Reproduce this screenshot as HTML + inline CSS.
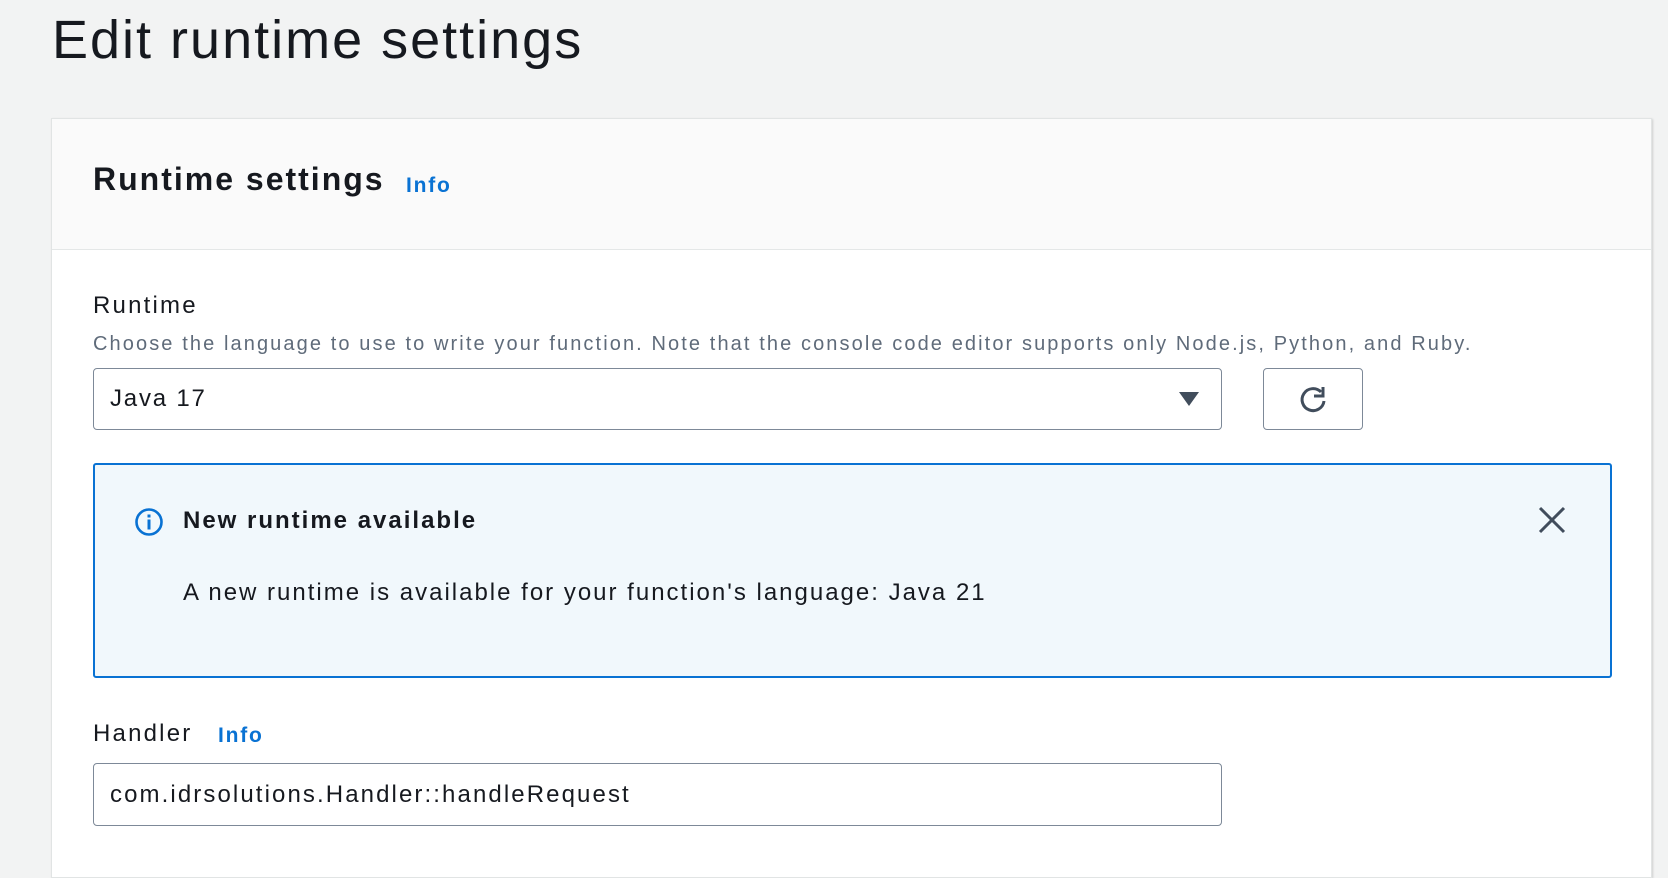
<!DOCTYPE html>
<html><head><meta charset="utf-8"><style>
*{margin:0;padding:0;box-sizing:border-box}
body{width:1668px;height:864px;background:#f2f3f3;font-family:"Liberation Sans",Arial,sans-serif;color:#16191f;position:relative;overflow:hidden}
.abs{position:absolute;white-space:nowrap}
h1{position:absolute;left:52px;top:9px;font-size:54px;font-weight:400;letter-spacing:2px;color:#16191f}
.panel{position:absolute;left:51px;top:118px;width:1601px;height:760px;background:#fff;border:1px solid #e1e4e4;box-shadow:1px 1px 2px rgba(0,0,0,.15)}
.hdr{position:absolute;left:0;top:0;right:0;height:131px;background:#fafafa;border-bottom:1px solid #e4e7e7}
.info{color:#0972d3;font-weight:700;letter-spacing:1.8px}
.box{position:absolute;border:1px solid #7d8998;border-radius:4px;background:#fff}
</style></head><body>
<h1>Edit runtime settings</h1>
<div class="panel"><div class="hdr"></div></div>
<div class="abs" style="left:93px;top:161px;font-size:32px;font-weight:700;letter-spacing:2px">Runtime settings</div>
<div class="abs info" style="left:406px;top:174px;font-size:21px">Info</div>
<div class="abs" style="left:93px;top:292px;font-size:24px;letter-spacing:2.2px">Runtime</div>
<div class="abs" style="left:93px;top:333px;font-size:20px;color:#5f6b7a;letter-spacing:2.1px">Choose the language to use to write your function. Note that the console code editor supports only Node.js, Python, and Ruby.</div>
<div class="box" style="left:93px;top:368px;width:1129px;height:62px"></div>
<div class="abs" style="left:110px;top:385px;font-size:24px;letter-spacing:1.8px">Java 17</div>
<svg class="abs" style="left:1178px;top:391px" width="22" height="16"><path d="M1 1h20l-10 14z" fill="#414d5c"/></svg>
<div class="box" style="left:1263px;top:368px;width:100px;height:62px"></div>
<svg class="abs" style="left:1296px;top:382px" width="34" height="34" viewBox="0 0 34 34"><path d="M25 10A11 11 0 1 0 28 19" fill="none" stroke="#414d5c" stroke-width="3"/><path d="M27 5v9h-9" fill="none" stroke="#414d5c" stroke-width="3"/></svg>
<div class="abs" style="left:93px;top:463px;width:1519px;height:215px;background:#f1f8fc;border:2px solid #0972d3;border-radius:3px"></div>
<svg class="abs" style="left:134px;top:507px" width="30" height="30" viewBox="0 0 30 30"><circle cx="15" cy="15" r="12.5" fill="none" stroke="#0972d3" stroke-width="2.6"/><rect x="13.5" y="12.5" width="3" height="10" fill="#0972d3"/><rect x="13.5" y="7.5" width="3" height="3" fill="#0972d3"/></svg>
<div class="abs" style="left:183px;top:507px;font-size:24px;font-weight:700;letter-spacing:2px">New runtime available</div>
<svg class="abs" style="left:1538px;top:506px" width="28" height="28"><path d="M2 2L26 26M26 2L2 26" stroke="#414d5c" stroke-width="3"/></svg>
<div class="abs" style="left:183px;top:579px;font-size:24px;letter-spacing:2px">A new runtime is available for your function's language: Java 21</div>
<div class="abs" style="left:93px;top:720px;font-size:24px;letter-spacing:2.2px">Handler</div>
<div class="abs info" style="left:218px;top:724px;font-size:21px">Info</div>
<div class="box" style="left:93px;top:763px;width:1129px;height:63px"></div>
<div class="abs" style="left:110px;top:781px;font-size:24px;letter-spacing:2.1px">com.idrsolutions.Handler::handleRequest</div>
</body></html>
